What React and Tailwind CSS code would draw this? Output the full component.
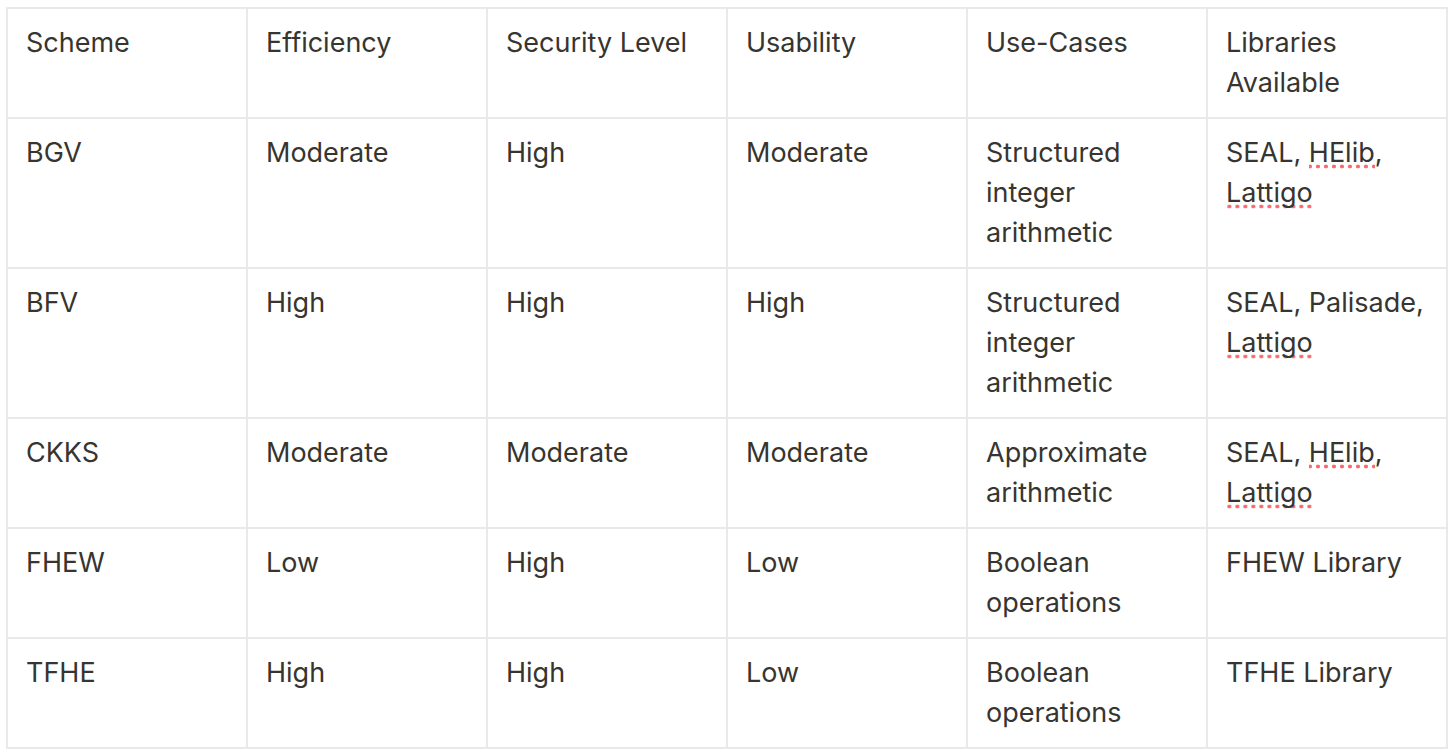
const rows = [
  ["Scheme", "Efficiency", "Security Level", "Usability", "Use-Cases", "Libraries Available"],
  ["BGV", "Moderate", "High", "Moderate", "Structured integer arithmetic", ["SEAL, ", { s: "HElib" }, ", ", { s: "Lattigo" }]],
  ["BFV", "High", "High", "High", "Structured integer arithmetic", ["SEAL, Palisade, ", { s: "Lattigo" }]],
  ["CKKS", "Moderate", "Moderate", "Moderate", "Approximate arithmetic", ["SEAL, ", { s: "HElib" }, ", ", { s: "Lattigo" }]],
  ["FHEW", "Low", "High", "Low", "Boolean operations", "FHEW Library"],
  ["TFHE", "High", "High", "Low", "Boolean operations", "TFHE Library"],
];

function Cell({ v }) {
  if (typeof v === "string") return v;
  return v.map((p, i) =>
    typeof p === "string" ? (
      <span key={i}>{p}</span>
    ) : (
      <span
        key={i}
        className="bg-[radial-gradient(circle,#fb6a6a_1.7px,transparent_2.2px)] bg-[length:8px_5px] bg-repeat-x bg-bottom"
      >
        {p.s}
      </span>
    )
  );
}

export default function App() {
  return (
    <div className="w-[1452px] h-[754px] bg-white pt-[7px] pl-[6px]" style={{ fontFamily: "Inter, 'Noto Sans', sans-serif" }}>
      <div className="grid grid-cols-[repeat(6,238px)] gap-[2px] p-[2px] bg-[#e9e9e7] w-[1442px]">
        {rows.flat().map((v, i) => (
          <div
            key={i}
            className="bg-white pl-[18px] pr-[10px] py-[14px] text-[27px] leading-[40px] text-[#37352f]"
          >
            <Cell v={v} />
          </div>
        ))}
      </div>
    </div>
  );
}
